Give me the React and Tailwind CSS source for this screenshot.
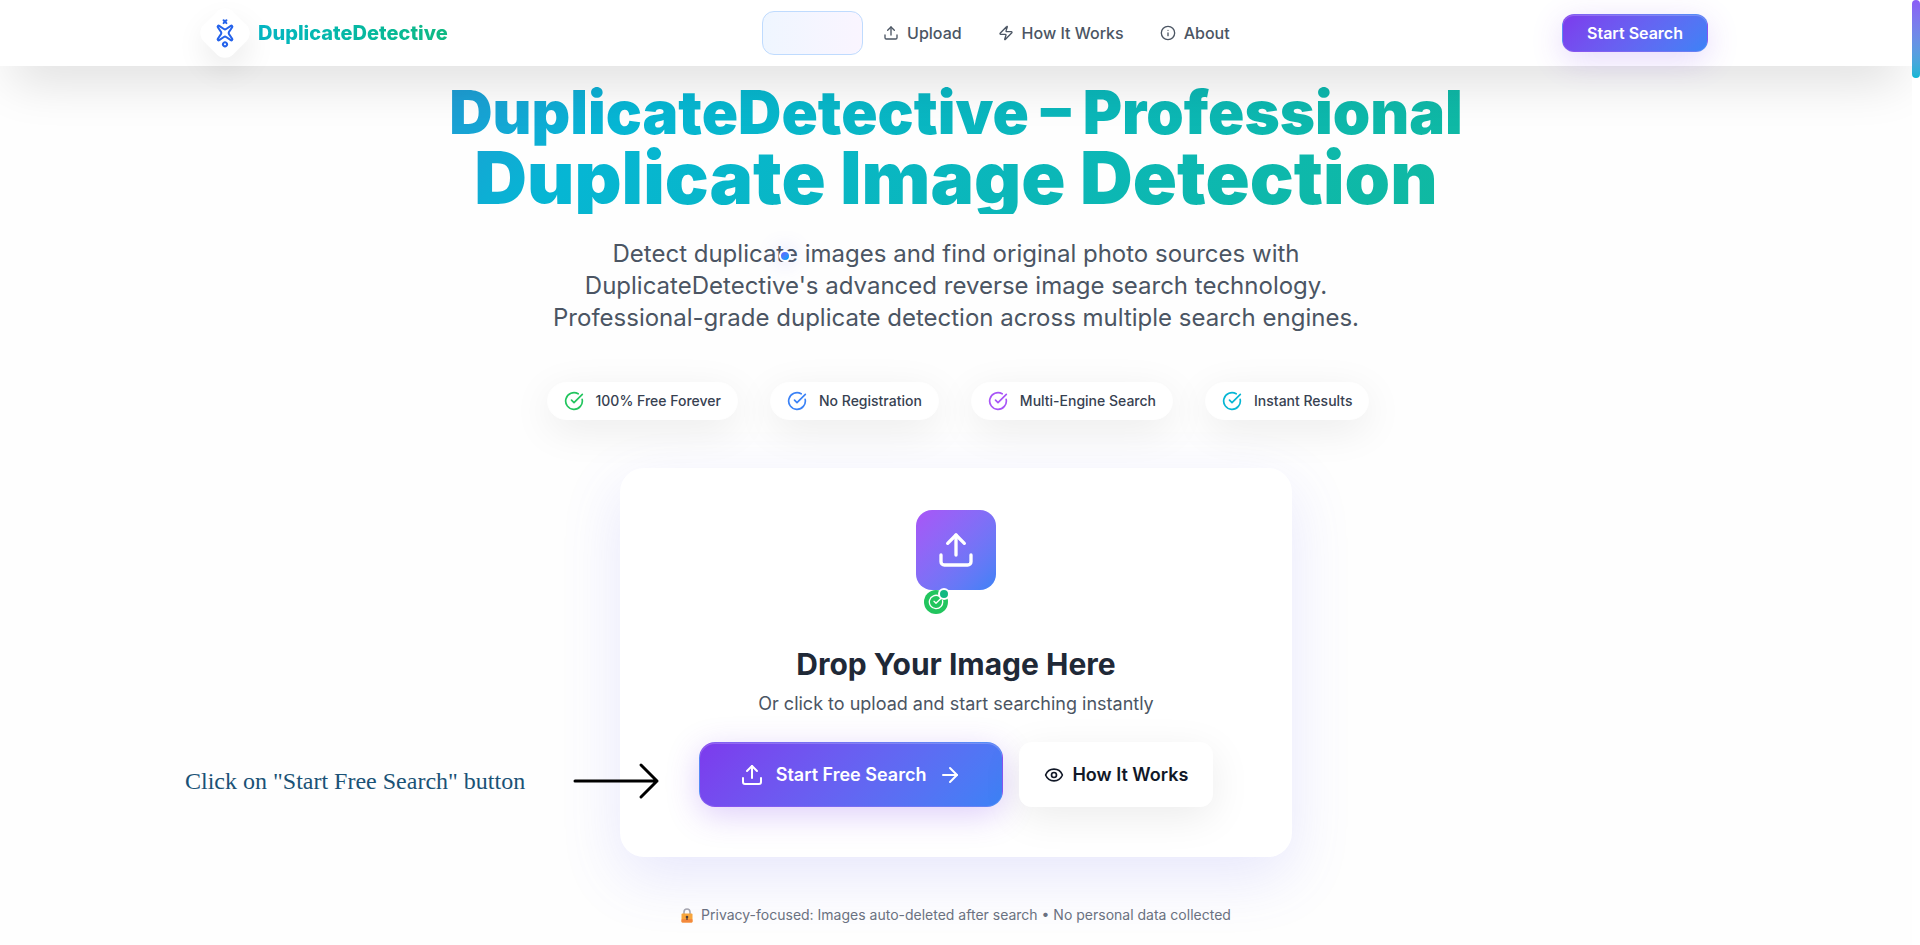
import React from "react";
import { ArrowRight, CircleCheckBig, Eye, Info, Sparkles, Upload, Zap } from "lucide-react";

const NAV_LINKS = [
  { label: "Upload", href: "#upload", Icon: Upload },
  { label: "How It Works", href: "#how", Icon: Zap },
  { label: "About", href: "#about", Icon: Info },
];

const FEATURES = [
  { label: "100% Free Forever", color: "text-[#22c55e]" },
  { label: "No Registration", color: "text-[#3b82f6]" },
  { label: "Multi-Engine Search", color: "text-[#a855f7]" },
  { label: "Instant Results", color: "text-[#06b6d4]" },
];

function Header() {
  return (
    <header className="relative z-10 bg-white shadow-[0_25px_50px_-12px_rgba(0,0,0,0.15)]">
      <div className="mx-auto flex h-[66px] max-w-[1536px] items-center justify-between px-4">
        <a href="#top" className="flex items-center gap-3">
          <span className="flex size-[42px] -rotate-45 items-center justify-center rounded-xl bg-white text-[#2563eb] shadow-[-8px_10px_30px_rgba(0,0,0,0.08)]">
            <Sparkles size={24} strokeWidth={2} />
          </span>
          <span className="bg-linear-to-r from-[#06b6c4] to-[#10b981] bg-clip-text text-xl font-extrabold text-transparent">
            DuplicateDetective
          </span>
        </a>
        <nav className="flex items-center">
          <a
            href="#home"
            aria-label="Home"
            className="mr-0.5 h-11 w-[101px] rounded-xl border border-[#bfdbfe] bg-linear-to-r from-[#eff6ff] to-[#faf5ff]"
          />
          {NAV_LINKS.map(({ label, href, Icon }) => (
            <a key={label} href={href} className="flex items-center gap-2 px-[18px] font-medium text-[#4b5563]">
              <Icon size={16} />
              {label}
            </a>
          ))}
        </nav>
        <button
          type="button"
          className="h-[38px] rounded-xl border border-white/10 bg-linear-135 from-[#7c3aed] to-[#3b82f6] px-6 font-semibold text-white shadow-[0_8px_32px_rgba(124,58,237,0.2),inset_0_1px_0_rgba(255,255,255,0.2)]"
        >
          Start Search
        </button>
      </div>
    </header>
  );
}

function LockIcon() {
  return (
    <svg width="12" height="15" viewBox="0 0 12 15" aria-hidden="true">
      <path d="M3 7V4a3 3 0 0 1 6 0v3" fill="none" stroke="#a8a8b0" strokeWidth="1.6" />
      <rect x="0.5" y="5.5" width="11" height="9" rx="1" fill="#f9a63a" />
      <rect x="0.5" y="11" width="11" height="3.5" rx="1" fill="#f58a3c" />
      <circle cx="6" cy="9" r="1.3" fill="#4a3a3a" />
      <path d="M6 9v3" stroke="#4a3a3a" strokeWidth="1.2" />
    </svg>
  );
}

function Annotation() {
  return (
    <div className="absolute top-[291px] -left-[437px] flex h-10 w-[475px] items-center justify-between">
      <span className="font-['Liberation_Serif',serif] text-2xl whitespace-nowrap text-[#1a5276]">
        Click on "Start Free Search" button
      </span>
      <svg width="88" height="38" viewBox="0 0 88 38" fill="none" stroke="#000" strokeWidth="3" strokeLinecap="round" strokeLinejoin="round" aria-hidden="true">
        <path d="M3 19h82M69 3l16 16-16 16" />
      </svg>
    </div>
  );
}

function UploadCard() {
  return (
    <section className="relative mt-12 w-full max-w-2xl rounded-3xl border-2 border-transparent bg-white px-10 pt-10 pb-12 text-center shadow-[0_20px_60px_rgba(99,102,241,0.15)]">
      <div className="relative mx-auto flex size-20 items-center justify-center rounded-2xl bg-linear-135 from-[#a855f7] to-[#3b82f6] text-white">
        <Upload size={40} />
        <span className="absolute top-20 left-2 flex size-6 items-center justify-center rounded-full bg-[#22c55e]">
          <CircleCheckBig size={16} />
          <span className="absolute -top-0.5 left-3.5 size-3 rounded-full border-2 border-white bg-[#10b981]" />
        </span>
      </div>
      <h2 className="mt-14 text-3xl font-bold text-[#1f2937]">Drop Your Image Here</h2>
      <p className="mt-2 text-lg text-[#4b5563]">Or click to upload and start searching instantly</p>
      <div className="mt-6 flex justify-center gap-4">
        <button
          type="button"
          className="flex h-[65px] items-center gap-3 rounded-2xl border border-white/10 bg-linear-135 from-[#7c3aed] to-[#3b82f6] px-10 text-lg font-semibold text-white shadow-[0_8px_32px_rgba(124,58,237,0.25),inset_0_1px_0_rgba(255,255,255,0.2)]"
        >
          <Upload size={24} />
          Start Free Search
          <ArrowRight size={24} />
        </button>
        <button
          type="button"
          className="flex h-[65px] items-center gap-2 rounded-xl border border-white bg-white px-6 text-lg font-semibold text-[#111827] shadow-[0_10px_40px_rgba(0,0,0,0.08)]"
        >
          <Eye size={20} />
          How It Works
        </button>
      </div>
      <Annotation />
    </section>
  );
}

export default function App() {
  return (
    <div id="top" className="flex min-h-screen bg-[#fefefe] font-['Inter',sans-serif]">
      <div className="min-w-0 flex-1 overflow-hidden">
        <Header />
        <main className="flex flex-col items-center px-4 pt-4 pb-5">
          <h1 className="bg-[linear-gradient(135deg,#209bd4_0%,#06b6d4_18%,#0bb7b8_60%,#10b9a0_100%)] bg-clip-text text-center font-black text-transparent">
            <span className="block text-[60px] leading-[60px]">DuplicateDetective – Professional</span>
            <span className="block text-[73px] leading-[72px]">Duplicate Image Detection</span>
          </h1>
          <p className="relative mt-6 text-center text-2xl text-[#4b5563]">
            Detect duplicate images and find original photo sources with
            <br />
            DuplicateDetective's advanced reverse image search technology.
            <br />
            Professional-grade duplicate detection across multiple search engines.
            <span className="absolute top-3 left-[226px] size-3 rounded-full border-2 border-white bg-linear-135 from-indigo-500 to-sky-500 shadow-[0_0_20px_rgba(99,102,241,0.4)]" />
          </p>
          <ul className="mt-12 flex justify-center gap-8 pl-1">
            {FEATURES.map(({ label, color }) => (
              <li
                key={label}
                className="flex h-[38px] items-center gap-3 rounded-full border border-white bg-white px-4 text-sm font-medium text-[#374151] shadow-[0_10px_40px_rgba(0,0,0,0.08)]"
              >
                <CircleCheckBig size={20} className={color} />
                {label}
              </li>
            ))}
          </ul>
          <UploadCard />
          <p className="mt-12 flex items-center gap-2 text-sm text-[#6b7280]">
            <LockIcon />
            Privacy-focused: Images auto-deleted after search • No personal data collected
          </p>
        </main>
      </div>
      <div className="w-2 shrink-0 bg-white">
        <div className="h-[78px] rounded-full bg-linear-to-b from-[#8b5cf6] to-[#06b6d4]" />
      </div>
    </div>
  );
}
